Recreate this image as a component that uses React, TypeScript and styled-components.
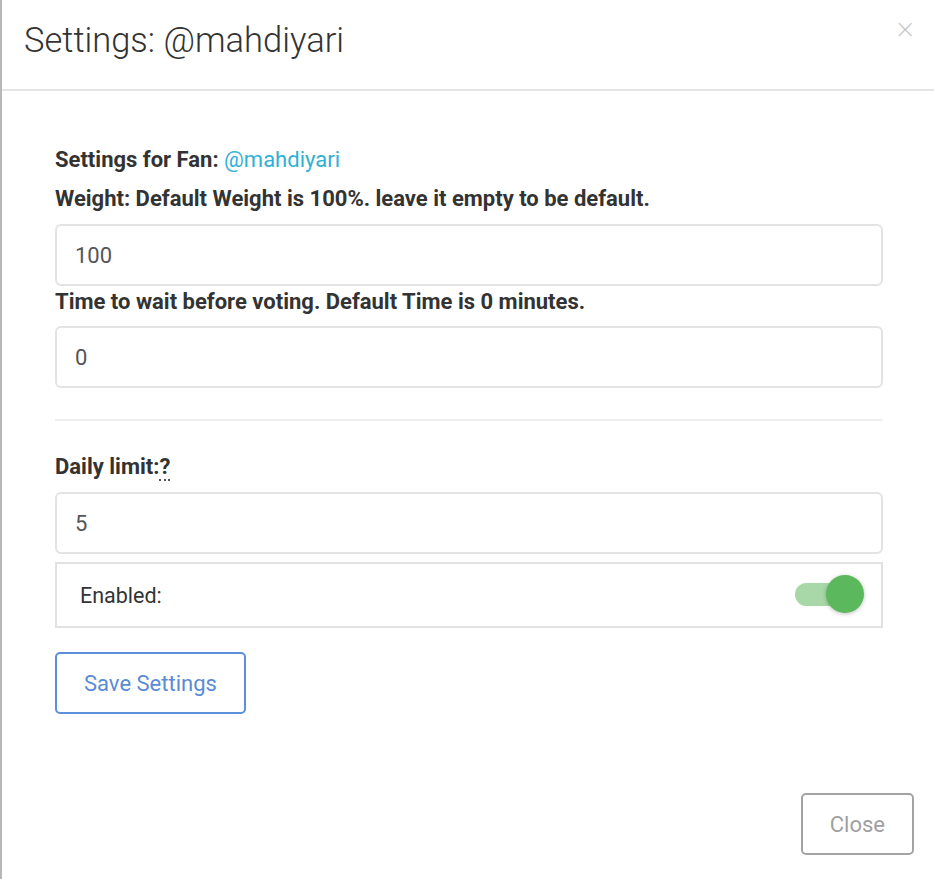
import styled, { createGlobalStyle } from "styled-components";

const GlobalStyle = createGlobalStyle`
  html, body {
    margin: 0;
    padding: 0;
    background: #ffffff;
    font-family: Roboto, "Noto Sans", Arial, sans-serif;
  }
  * { box-sizing: border-box; }
`;

const Modal = styled.div`
  width: 934px;
  height: 879px;
  border-left: 2px solid #b8b8b8;
  background: #fff;
  display: flex;
  flex-direction: column;
`;

const Header = styled.div`
  height: 91px;
  border-bottom: 2px solid #e5e5e5;
  padding: 0 22px;
  display: flex;
  align-items: center;
  position: relative;
`;

const Title = styled.h4`
  margin: 0 0 10px 0;
  font-size: 34.5px;
  font-weight: 300;
  color: #333;
`;

const CloseX = styled.button`
  position: absolute;
  top: 14px;
  right: 18px;
  border: none;
  background: none;
  font-size: 26px;
  font-weight: 300;
  color: #c8c8c8;
  padding: 0;
  cursor: pointer;
  font-family: "DejaVu Sans", sans-serif;
`;

const Body = styled.div`
  flex: 1;
  padding: 56px 51px 0 53px;
  display: flex;
  flex-direction: column;
`;

const Label = styled.div<{ $mt?: number; $mb?: number }>`
  font-size: 22px;
  font-weight: 700;
  color: #333;
  line-height: 26px;
  margin-top: ${(p) => p.$mt ?? 0}px;
  margin-bottom: ${(p) => p.$mb ?? 12}px;
`;

const Link = styled.span`
  color: #31b0d5;
  font-weight: 400;
`;

const Abbr = styled.span`
  border-bottom: 2px dotted #555;
  line-height: 1;
`;

const Input = styled.input`
  width: 100%;
  height: 62px;
  border: 2px solid #e3e3e3;
  border-radius: 6px;
  padding: 0 18px;
  font-size: 22px;
  font-family: inherit;
  color: #555;
  outline: none;
`;

const Divider = styled.hr`
  border: none;
  border-top: 2px solid #eeeeee;
  margin: 31px 0 33px;
`;

const ToggleRow = styled.div`
  margin-top: 8px;
  height: 66px;
  border: 2px solid #e1e1e1;
  display: flex;
  align-items: center;
  justify-content: space-between;
  padding: 0 17px 0 23px;
  font-size: 21.5px;
  color: #333;
`;

const Switch = styled.div`
  position: relative;
  width: 70px;
  height: 38px;
  margin-top: -3px;
`;

const Track = styled.div`
  position: absolute;
  left: 1px;
  top: 8px;
  width: 50px;
  height: 23px;
  border-radius: 12px;
  background: #a9d8a8;
`;

const Knob = styled.div`
  position: absolute;
  right: 0;
  top: 0;
  width: 38px;
  height: 38px;
  border-radius: 50%;
  background: #5cb85c;
  box-shadow: 0 1px 4px rgba(0, 0, 0, 0.25);
`;

const OutlineButton = styled.button<{ $color: string; $text: string }>`
  height: 62px;
  padding: 0 27px;
  background: #fff;
  border: 2px solid ${(p) => p.$color};
  border-radius: 5px;
  color: ${(p) => p.$text};
  font-size: 22px;
  font-family: inherit;
  cursor: pointer;
`;

const SaveWrap = styled.div`
  margin-top: 24px;
`;

const Footer = styled.div`
  display: flex;
  justify-content: flex-end;
  padding: 0 20px 24px;
`;

export default function App() {
  return (
    <>
      <GlobalStyle />
      <Modal>
        <Header>
          <Title>Settings: @mahdiyari</Title>
          <CloseX>×</CloseX>
        </Header>
        <Body>
          <Label $mb={13}>
            Settings for Fan: <Link>@mahdiyari</Link>
          </Label>
          <Label>Weight: Default Weight is 100%. leave it empty to be default.</Label>
          <Input defaultValue="100" />
          <Label $mt={3} $mb={11}>
            Time to wait before voting. Default Time is 0 minutes.
          </Label>
          <Input defaultValue="0" />
          <Divider />
          <Label>
            Daily limit:<Abbr>?</Abbr>
          </Label>
          <Input defaultValue="5" />
          <ToggleRow>
            <span>Enabled:</span>
            <Switch>
              <Track />
              <Knob />
            </Switch>
          </ToggleRow>
          <SaveWrap>
            <OutlineButton $color="#5b8fdc" $text="#5a8bd6">
              Save Settings
            </OutlineButton>
          </SaveWrap>
        </Body>
        <Footer>
          <OutlineButton $color="#a3a3a3" $text="#a0a0a0">
            Close
          </OutlineButton>
        </Footer>
      </Modal>
    </>
  );
}
